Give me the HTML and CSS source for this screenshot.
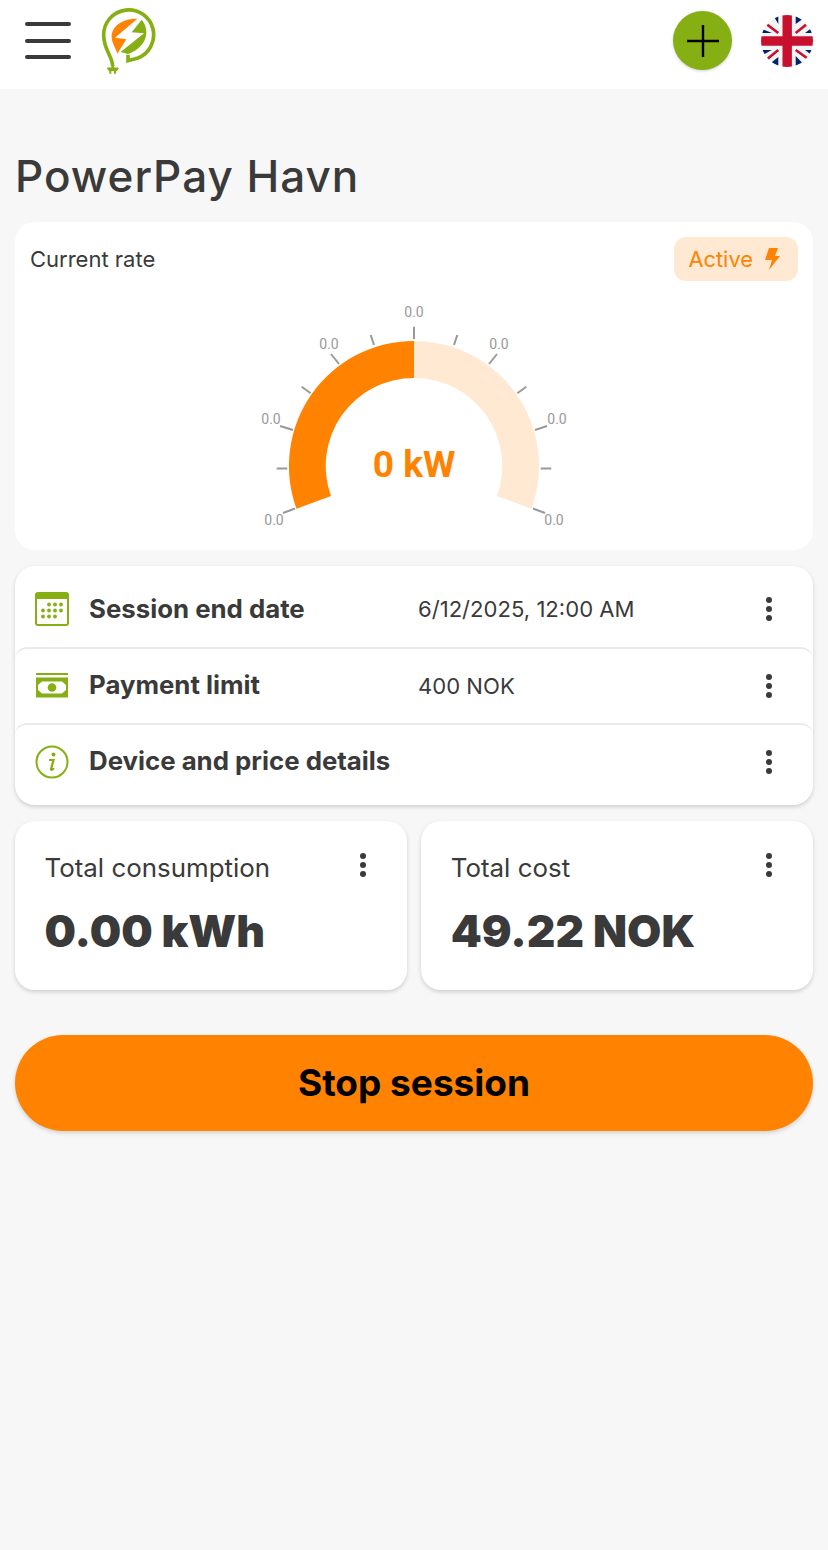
FILE: index.html
```html
<!DOCTYPE html>
<html lang="en">
<head>
<meta charset="utf-8">
<title>PowerPay Havn</title>
<link rel="stylesheet" href="styles.css">
</head>
<body>
<header class="topbar">
  <div class="topbar-left">
    <button class="menu-btn" aria-label="Menu"><span></span><span></span><span></span></button>
    <svg class="logo" viewBox="300 24 180 210" width="60" height="70">
      <path d="M338 198 C336 165 311 150 311 105 A75 75 0 1 1 412 175 L384 182 V164" fill="none" stroke="#86af14" stroke-width="11"/>
      <path d="M412 56 C368 54 333 80 335 112 C336 130 345 140 352 161 L379 118 L345 113 Z" fill="#ff8200"/>
      <path d="M425 59 L395 97 L432 100 L362 156 L384 162 C448 138 448 85 425 59 Z" fill="#86af14"/>
      <path d="M338 190 V206" stroke="#86af14" stroke-width="8" fill="none"/>
      <path d="M322 204 H355 L350 212 H327 Z" fill="#86af14" stroke="#86af14" stroke-width="3" stroke-linejoin="round"/>
      <path d="M331 210 V221 M345 210 V221" stroke="#86af14" stroke-width="6" fill="none"/>
    </svg>
  </div>
  <div class="topbar-right">
    <button class="add-btn" aria-label="Add">
      <svg viewBox="0 0 34 34" width="34" height="34"><path d="M17 1v32M1 17h32" stroke="#000" stroke-width="2.4" fill="none"/></svg>
    </button>
    <svg class="flag" viewBox="0 0 52 52" width="52" height="52">
      <defs><clipPath id="flag-clip"><circle cx="26" cy="26" r="26"/></clipPath></defs>
      <g clip-path="url(#flag-clip)">
        <rect width="52" height="52" fill="#f4f4f4"/>
        <path d="M0 13.500 L11 18 H0Z M12 0 L17.300 9 V0Z M34.700 0 V9 L41 4.500 V0Z M52 12 L44 18 H52Z M0 35 H10.700 L0 41Z M17.300 42 L10.700 47.300 L17.300 52Z M34.700 41 V52 L42.300 49Z M52 35 H44 L52 41Z" fill="#012169"/>
        <path d="M6.300 9.700 L17.300 18 M34.700 18 L45 9.700 M6.300 44 L17.300 35 M34.700 35 L47.300 44" stroke="#c8102e" stroke-width="2.600" fill="none"/>
        <path d="M21.500 0h9.400v21.300H52v9.400H30.900V52h-9.400V30.700H0v-9.400h21.500Z" fill="#c8102e"/>
      </g>
    </svg>
  </div>
</header>

<main class="page">
  <h1 class="title">PowerPay Havn</h1>

  <section class="card rate-card">
    <div class="rate-head">
      <span class="rate-label">Current rate</span>
      <span class="badge">Active
        <svg viewBox="0 0 16 22" width="16" height="22"><path d="M5 0h9l-3 8h5L5 22l3-10H1Z" fill="#ff8200"/></svg>
      </span>
    </div>
    <svg class="gauge" viewBox="0 -4 798 240" width="798" height="240">
      <path d="M399 33 A125 125 0 0 0 281.500 200.800 L316 188 A88 88 0 0 1 399 70 Z" fill="#ff8200"/>
      <path d="M399 33 A125 125 0 0 1 516.500 200.800 L482 188 A88 88 0 0 0 399 70 Z" fill="#ffe9d3"/>
      <g class="ticks">
        <path d="M280 200.500L268 205"/>
        <path d="M272.300 160.500H261.700"/>
        <path d="M278 122L265 118"/>
        <path d="M295.700 85.300L286.700 78.700"/>
        <path d="M324 56L316 46"/>
        <path d="M359 37L355.700 27"/>
        <path d="M399 31V18.700"/>
        <path d="M439 37L442.300 27"/>
        <path d="M474 56L482 46"/>
        <path d="M502.300 85.300L511.300 78.700"/>
        <path d="M520 122L532 118"/>
        <path d="M525.700 160.500H536.300"/>
        <path d="M518 200.500L530 205"/>
      </g>
      <g class="tick-labels">
        <text x="259" y="217">0.0</text>
        <text x="256" y="116">0.0</text>
        <text x="314" y="41">0.0</text>
        <text x="399" y="9">0.0</text>
        <text x="484" y="41">0.0</text>
        <text x="542" y="116">0.0</text>
        <text x="539" y="217">0.0</text>
      </g>
      <text class="gauge-value" x="399" y="169">0 kW</text>
    </svg>
  </section>

  <section class="card list-card">
    <div class="row row-first">
      <svg class="row-icon" viewBox="0 0 34 34" width="34" height="34">
        <rect x="1" y="1" width="32" height="32" rx="2" fill="none" stroke="#86af14" stroke-width="2"/>
        <rect x="1" y="1" width="32" height="6" fill="#86af14"/>
        <g fill="#86af14">
          <circle cx="14" cy="12.500" r="1.900"/><circle cx="20" cy="12.500" r="1.900"/><circle cx="26" cy="12.500" r="1.900"/>
          <circle cx="8" cy="18.500" r="1.900"/><circle cx="14" cy="18.500" r="1.900"/><circle cx="20" cy="18.500" r="1.900"/><circle cx="26" cy="18.500" r="1.900"/>
          <circle cx="8" cy="24.500" r="1.900"/><circle cx="14" cy="24.500" r="1.900"/><circle cx="20" cy="24.500" r="1.900"/>
        </g>
      </svg>
      <span class="row-name">Session end date</span>
      <span class="row-value">6/12/2025, 12:00 AM</span>
      <button class="kebab" aria-label="More"><i></i><i></i><i></i></button>
    </div>
    <div class="row row-mid">
      <svg class="row-icon" viewBox="0 0 34 26" width="34" height="26">
        <rect x="1" y="0" width="32" height="2" fill="#86af14"/>
        <path fill-rule="evenodd" d="M1 4.500h32v20H1Z M7 8.500 L3 12 V17 L7 20.500 H27 L31 17 V12 L27 8.500Z" fill="#86af14"/>
        <circle cx="17" cy="14.500" r="4.300" fill="#86af14"/>
      </svg>
      <span class="row-name">Payment limit</span>
      <span class="row-value">400 NOK</span>
      <button class="kebab" aria-label="More"><i></i><i></i><i></i></button>
    </div>
    <div class="row row-last">
      <svg class="row-icon" viewBox="0 0 34 34" width="34" height="34">
        <circle cx="17" cy="17" r="15.500" fill="none" stroke="#86af14" stroke-width="2"/>
        <circle cx="18.500" cy="9.500" r="2" fill="#86af14"/>
        <path d="M14 15h4.500l-2.500 9c-.3 1.200 1 1.200 3-.8" fill="none" stroke="#86af14" stroke-width="2.200"/>
      </svg>
      <span class="row-name">Device and price details</span>
      <button class="kebab" aria-label="More"><i></i><i></i><i></i></button>
    </div>
  </section>

  <section class="stats">
    <div class="card stat-card">
      <div class="stat-head"><span class="stat-label">Total consumption</span><button class="kebab" aria-label="More"><i></i><i></i><i></i></button></div>
      <div class="stat-value">0.00 kWh</div>
    </div>
    <div class="card stat-card">
      <div class="stat-head"><span class="stat-label">Total cost</span><button class="kebab" aria-label="More"><i></i><i></i><i></i></button></div>
      <div class="stat-value">49.22 NOK</div>
    </div>
  </section>

  <button class="stop-btn">Stop session</button>
</main>
</body>
</html>
```
FILE: styles.css
```css
* { box-sizing: border-box; }
html, body { margin: 0; padding: 0; }
body {
  width: 828px;
  height: 1550px;
  background: #f7f7f7;
  color: #3a3a3a;
  font-family: Inter, "Liberation Sans", sans-serif;
  overflow: hidden;
}
button { border: 0; background: none; padding: 0; font-family: inherit; color: inherit; }

.topbar {
  height: 89px;
  background: #fff;
  display: flex;
  justify-content: space-between;
  padding: 8px 15px 0 25px;
}
.topbar-left { display: flex; gap: 29px; align-items: flex-start; }
.menu-btn {
  width: 46px;
  margin-top: 14px;
  display: flex;
  flex-direction: column;
  gap: 12.500px;
}
.menu-btn span { display: block; height: 4px; border-radius: 2px; background: #3a3a3a; }
.topbar-right { display: flex; gap: 29px; align-items: flex-start; }
.add-btn {
  width: 59px;
  height: 59px;
  margin-top: 3px;
  border-radius: 50%;
  background: #86af14;
  box-shadow: 0 1px 3px rgba(0,0,0,.2);
  display: flex;
  align-items: center;
  justify-content: center;
}
.flag { margin-top: 7px; }

.page { padding: 0 15px; }
.title {
  margin: 56px 0 0;
  height: 77px;
  font-family: Inter, sans-serif;
  font-weight: 500;
  font-size: 44px;
  letter-spacing: 1px;
  line-height: 62px;
  color: #3a3a3a;
}
.card { background: #fff; border-radius: 20px; }
.rate-card { height: 328px; padding: 15px 15px 0; }
.rate-head { display: flex; justify-content: space-between; align-items: center; height: 44px; }
.rate-label { font-size: 22px; }
.badge {
  height: 44px;
  width: 124.500px;
  border-radius: 12px;
  background: #ffe9d3;
  color: #ff8200;
  font-size: 21.800px;
  display: flex;
  align-items: center;
  justify-content: flex-start;
  padding-left: 15px;
  gap: 11px;
}
.gauge { display: block; margin: 23px 0 0 -15px; }
.ticks path { stroke: #999; stroke-width: 2; fill: none; }
.tick-labels text { font-family: Roboto, sans-serif; font-size: 14px; fill: #999; text-anchor: middle; }
.gauge-value { font-family: Roboto, sans-serif; font-weight: 700; font-size: 37px; fill: #ff8200; text-anchor: middle; }

.list-card { margin-top: 16px; height: 239px; box-shadow: 0 2px 4px rgba(0,0,0,.16); display: flex; flex-direction: column; }
.row { display: flex; align-items: center; padding: 0 20px; position: relative; }
.row-first { height: 81px; padding-top: 5px; }
.row-mid { height: 76px; border-top: 2px solid #eaeaea; border-radius: 12px 12px 0 0; padding-bottom: 1px; }
.row-last { height: 82px; border-top: 2px solid #eaeaea; border-radius: 12px 12px 0 0; padding-bottom: 7px; }
.row-icon { flex: none; width: 34px; }
.row-name { width: 329px; margin: 0 0 2px 20px; font-weight: 700; font-size: 25.800px; }
.row-last .row-name { width: auto; }
.row-value { font-size: 22.100px; flex: 1; }
.kebab { width: 8px; display: flex; flex-direction: column; gap: 3px; align-items: center; }
.kebab i { display: block; width: 6px; height: 6px; border-radius: 50%; background: #3a3a3a; }
.row .kebab { position: absolute; right: 40px; }

.stats { margin-top: 16px; display: grid; grid-template-columns: 391.750px 391.750px; gap: 14.500px; }
.stat-card { height: 169px; padding: 30px 30px 0 29.500px; box-shadow: 0 2px 4px rgba(0,0,0,.16); }
.stat-head { display: flex; justify-content: space-between; align-items: flex-start; height: 40px; }
.stat-label { font-size: 25.900px; margin-top: 1px; }
.stat-head .kebab { margin: 2px 10px 0 0; }
.stat-value { margin-top: 12px; font-weight: 900; font-size: 44.300px; line-height: 56px; }

.stop-btn {
  display: block;
  margin-top: 45px;
  width: 798px;
  height: 96px;
  padding-bottom: 2px;
  border-radius: 48px;
  background: #ff8200;
  box-shadow: 0 2px 4px rgba(0,0,0,.16);
  color: #000;
  font-weight: 700;
  font-size: 37px;
}
```
